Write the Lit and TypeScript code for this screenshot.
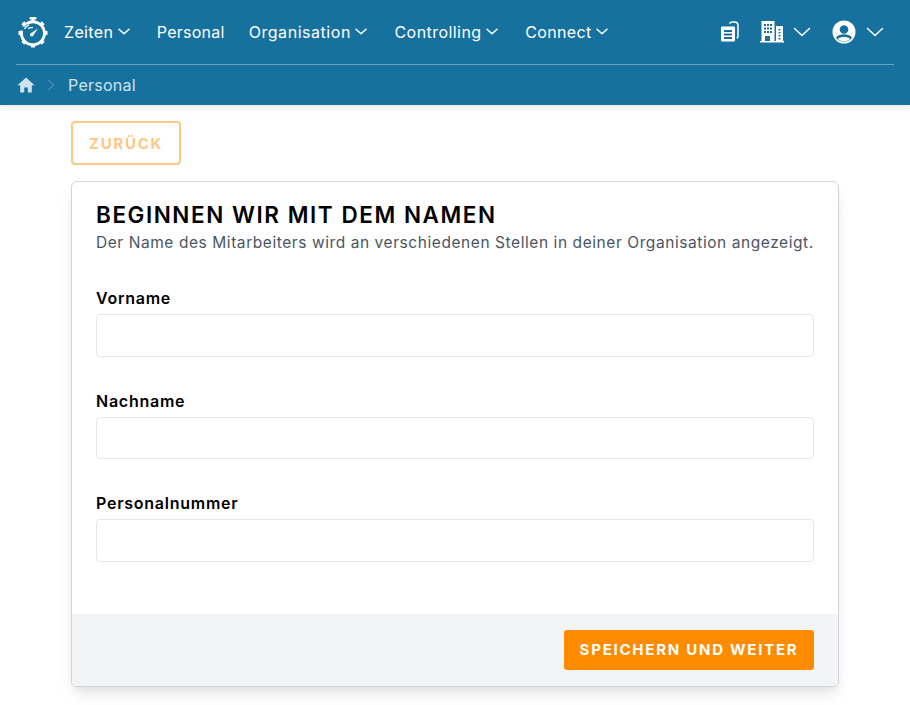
import { LitElement, html, css, svg } from "lit";
import { customElement } from "lit/decorators.js";

const chev = (w: number, h: number, cls = "chev") => html`<svg class=${cls} width=${w} height=${h} viewBox="0 0 18 10" fill="none" stroke="currentColor" stroke-linecap="round" stroke-linejoin="round"><path d="M1.500 1.500 9 8.500l7.500-7"/></svg>`;

const teeth = [45, 90, 135, 180, 225, 270, 315].map(
  (a) => svg`<rect x="14" y="4.500" width="4" height="4" fill="#fff" transform="rotate(${a} 16 19)"/>`
);

@customElement("app-root")
export class AppRoot extends LitElement {
  static styles = css`
    :host { display: block; width: 910px; height: 705px; overflow: hidden; background: #fff; color: #000; font-family: Inter, "Noto Sans", sans-serif; }
    * { box-sizing: border-box; }
    header { height: 105px; background: #16719f; color: #fff; padding: 0 16px; box-shadow: 0 2px 8px rgba(0,0,0,.1); position: relative; }
    .nav { height: 65px; border-bottom: 1px solid rgba(255,255,255,.35); display: flex; align-items: center; padding-bottom: 1px; }
    .logo { margin-left: 1px; margin-right: 15px; display: block; }
    .item { display: flex; align-items: center; gap: 4.500px; font-size: 16px; font-weight: 400; letter-spacing: .36px; margin-right: 24px; white-space: nowrap; }
    .item.pers { letter-spacing: .25px; }
    .item.org { letter-spacing: .55px; }
    .item.ctrl { letter-spacing: .45px; }
    .chev { display: block; stroke-width: 1.500; }
    .small { stroke-width: 2.200; margin-right: 3px; }
    .spacer { flex: 1; }
    .right { display: flex; align-items: center; padding-right: 10px; }
    .docs { margin-right: 20px; }
    .building { margin-right: 9px; }
    .avatar { margin-left: 21px; margin-right: 10px; }
    .crumb { height: 40px; display: flex; align-items: center; color: #cfe3ee; font-size: 16px; letter-spacing: .25px; padding-left: 1px; }
    .crumb .sep { margin: 0 14px 0 13px; display: block; }
    main { padding: 16px 71px 0; }
    .back { display: flex; align-items: center; justify-content: center; width: 110px; height: 44px; border: 2px solid #ffc880; border-radius: 4px; color: #ffc880; background: #fff; font-weight: 700; font-size: 15px; letter-spacing: 1.750px; }
    .card { margin-top: 16px; width: 768px; height: 506px; border: 1px solid #d1d5db; border-radius: 6px; background: #fff; box-shadow: 0 10px 15px -3px rgba(0,0,0,.1), 0 4px 6px -2px rgba(0,0,0,.05); display: flex; flex-direction: column; overflow: hidden; }
    .body { flex: 1; padding: 19px 24px 0; }
    h1 { margin: 0; font-size: 22.500px; line-height: 28px; font-weight: 600; letter-spacing: 1.550px; white-space: nowrap; }
    .sub { margin: 2px 0 0; font-size: 15.500px; line-height: 24px; color: #4b5563; white-space: nowrap; letter-spacing: .57px; }
    .fields { margin-top: 33px; }
    .field { display: flex; flex-direction: column; margin-bottom: 34px; }
    label { font-size: 16px; line-height: 20px; font-weight: 600; letter-spacing: .75px; margin-bottom: 6px; }
    .input { height: 42.500px; border: 1px solid #e5e7eb; border-radius: 4px; background: #fff; }
    footer { height: 72px; background: #f3f4f6; padding: 16px 24px; display: flex; justify-content: flex-end; }
    .save { width: 250px; height: 40px; padding-bottom: 2px; display: flex; align-items: center; justify-content: center; background: #ff8c00; color: #fff; border-radius: 3px; font-weight: 700; font-size: 15px; letter-spacing: 1.750px; white-space: nowrap; }
  `;

  render() {
    return html`
      <header>
        <div class="nav">
          <svg class="logo" width="32" height="36" viewBox="0 0 32 36" fill="none">
            <rect x="12.500" y="3" width="7" height="2.500" rx="1" fill="#fff"/>
            <rect x="14.500" y="5" width="3" height="3" fill="#fff"/>
            ${teeth}
            <path d="M10 9.500A11.500 11.500 0 1 1 4.800 16.500" stroke="#fff" stroke-width="2.800"/>
            <path d="M7.500 15A9.500 9.500 0 0 1 12 10.800M6 12.500A11 11 0 0 1 10 8.500" stroke="#fff" stroke-width="1.300"/>
            <path d="M11 14.500c2-1 3.500-1 5-.8" stroke="#fff" stroke-width="1.200"/>
            <path d="M13.500 19.500 21 14.500l-5 7.300z" fill="#fff"/>
            <circle cx="14.800" cy="20.800" r="1.800" fill="#fff"/>
          </svg>
          <div class="item">Zeiten ${chev(12, 7, "chev small")}</div>
          <div class="item pers">Personal</div>
          <div class="item org">Organisation ${chev(12, 7, "chev small")}</div>
          <div class="item ctrl">Controlling ${chev(12, 7, "chev small")}</div>
          <div class="item">Connect ${chev(12, 7, "chev small")}</div>
          <div class="spacer"></div>
          <div class="right">
            <svg class="docs" width="20" height="24" viewBox="0 0 20 24" fill="#fff">
              <path d="M9.500 3.500c.6-1 1.800-1.500 3.300-1.500h1.400c2.200 0 3.800 1.500 3.800 3.500v10.500c0 1-.4 1.900-1.200 2.400" fill="none" stroke="#fff" stroke-width="1.500"/>
              <path fill-rule="evenodd" d="M2.500 6.500h11c1 0 1.500.5 1.500 1.500v12c0 1-.5 1.500-1.500 1.500h-11C1.500 21.500 1 21 1 20V8c0-1 .5-1.500 1.500-1.500zM4 10v2h8v-2zm0 3.500v2h8v-2zm0 3.500v2h8v-2z"/>
            </svg>
            <svg class="building" width="24" height="24" viewBox="0 0 24 24" fill="#fff">
              <path fill-rule="evenodd" d="M1.500 1h13v21h-13zM4 4v2h2V4zm3 0v2h2V4zm3 0v2h2V4zM4 7.500v2h2v-2zm3 0v2h2v-2zm3 0v2h2v-2zM4 11v2h2v-2zm3 0v2h2v-2zm3 0v2h2v-2zM5 16v5h5v-5z"/>
              <path fill-rule="evenodd" d="M16 6h7v16h-7zm2.500 3v1.500h2V9zm0 3v1.500h2V12zm0 3v1.500h2V15zm0 3v1.500h2V18z"/>
              <rect x="0" y="21" width="24" height="1.500"/>
            </svg>
            ${chev(18, 10)}
            <svg class="avatar" width="24" height="24" viewBox="0 0 24 24">
              <circle cx="12" cy="12" r="11.500" fill="#fff"/>
              <circle cx="12" cy="9.500" r="4.300" fill="#16719f"/>
              <path d="M4 18c1.500-3 4.500-3.800 8-3.800s6.500.8 8 3.800c-2 2.500-5 3.600-8 3.600s-6-1.100-8-3.600z" fill="#16719f"/>
              <path d="M5.800 19c2 1.800 4 2.300 6.200 2.300s4.200-.5 6.200-2.300c-1.500-1.600-3.700-2-6.200-2s-4.700.4-6.200 2z" fill="#fff"/>
            </svg>
            ${chev(18, 10)}
          </div>
        </div>
        <div class="crumb">
          <svg width="18" height="16" viewBox="0 0 18 16" fill="#cfe3ee"><path d="M9 .5.500 8.300h2.700V15.500h4V10.500h3.600v5h4V8.300h2.700z"/></svg>
          <svg class="sep" width="6" height="12" viewBox="0 0 6 12" fill="none" stroke="#6fa5c2" stroke-width="1"><path d="M.5 1 5.500 6 .5 11"/></svg>
          <span>Personal</span>
        </div>
      </header>
      <main>
        <div class="back">ZURÜCK</div>
        <section class="card">
          <div class="body">
            <h1>BEGINNEN WIR MIT DEM NAMEN</h1>
            <p class="sub">Der Name des Mitarbeiters wird an verschiedenen Stellen in deiner Organisation angezeigt.</p>
            <div class="fields">
              <div class="field"><label>Vorname</label><div class="input"></div></div>
              <div class="field"><label>Nachname</label><div class="input"></div></div>
              <div class="field"><label>Personalnummer</label><div class="input"></div></div>
            </div>
          </div>
          <footer><div class="save">SPEICHERN UND WEITER</div></footer>
        </section>
      </main>
    `;
  }
}
